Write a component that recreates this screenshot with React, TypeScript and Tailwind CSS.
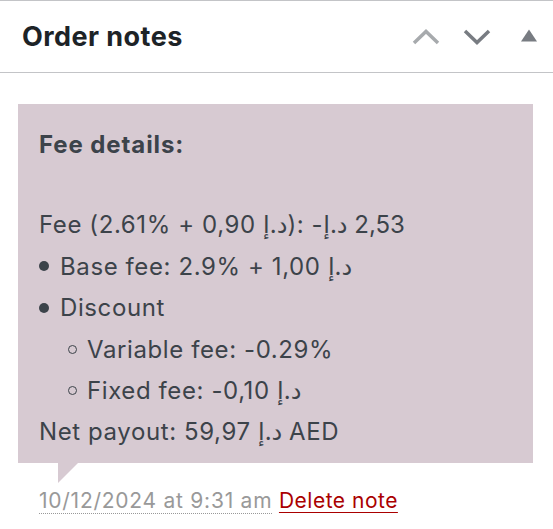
import React from "react";

const Ar = () => <bdi>د.إ</bdi>;

const Disc = () => (
  <span className="inline-block w-[10px] h-[10px] rounded-full bg-[#3c434a] mr-[11px] align-middle relative top-[-2px]" />
);
const Ring = () => (
  <span className="inline-block w-[9px] h-[9px] rounded-full border-[1.5px] border-[#3c434a] mr-[10px] align-middle relative top-[-2px]" />
);

export default function App() {
  return (
    <div className="w-[553px] min-h-[529px] bg-white font-['Inter','DejaVu_Sans',sans-serif]">
      <div className="h-[73px] border-t border-b border-[#c3c4c7] flex items-center justify-between pl-[22px] pr-[16px]">
        <h2 className="text-[27px] font-bold tracking-[0.45px] text-[#1d2327] leading-none">Order notes</h2>
        <div className="flex items-center">
          <svg width="28" height="16" viewBox="0 0 28 16" className="mr-[23px]">
            <polyline points="2,14 14,2.5 26,14" fill="none" stroke="#a7aaad" strokeWidth="3.5" />
          </svg>
          <svg width="28" height="16" viewBox="0 0 28 16" className="mr-[30px]">
            <polyline points="2,2 14,13.5 26,2" fill="none" stroke="#787c82" strokeWidth="3.5" />
          </svg>
          <svg width="16" height="13" viewBox="0 0 16 13" className="mt-[-3px]">
            <polygon points="0,12.5 16,12.5 8,0.5" fill="#787c82" />
          </svg>
        </div>
      </div>
      <div className="pt-[31px] pl-[18px] pr-[20px]">
        <div className="relative bg-[#d7cad2] pl-[21px] pt-[20px] pb-[10px] text-[24px] tracking-[0.6px] text-[#3c434a] leading-[41.4px]">
          <div className="font-bold tracking-[0.9px]">Fee details:</div>
          <div className="mt-[39px]">
            Fee (2.61% + 0,90 <Ar />): -<Ar /> 2,53
          </div>
          <div>
            <Disc />
            Base fee: 2.9% + 1,00 <Ar />
          </div>
          <div>
            <Disc />
            Discount
          </div>
          <div className="pl-[29px]">
            <Ring />
            Variable fee: -0.29%
          </div>
          <div className="pl-[29px]">
            <Ring />
            Fixed fee: -0,10 <Ar />
          </div>
          <div>
            Net payout: 59,97 <Ar /> AED
          </div>
          <div className="absolute left-[40px] top-full w-0 h-0 border-t-[20px] border-r-[20px] border-t-[#d7cad2] border-r-transparent" />
        </div>
        <p className="mt-[24px] pl-[21px] text-[21px] tracking-[0.75px] leading-[28px] text-[#999]">
          <abbr className="no-underline border-b border-dotted border-[#999]">10/12/2024 at 9:31 am</abbr>{" "}
          <a href="#" className="text-[#a00] underline underline-offset-[4px] decoration-1 tracking-[0.5px]">Delete note</a>
        </p>
      </div>
    </div>
  );
}
